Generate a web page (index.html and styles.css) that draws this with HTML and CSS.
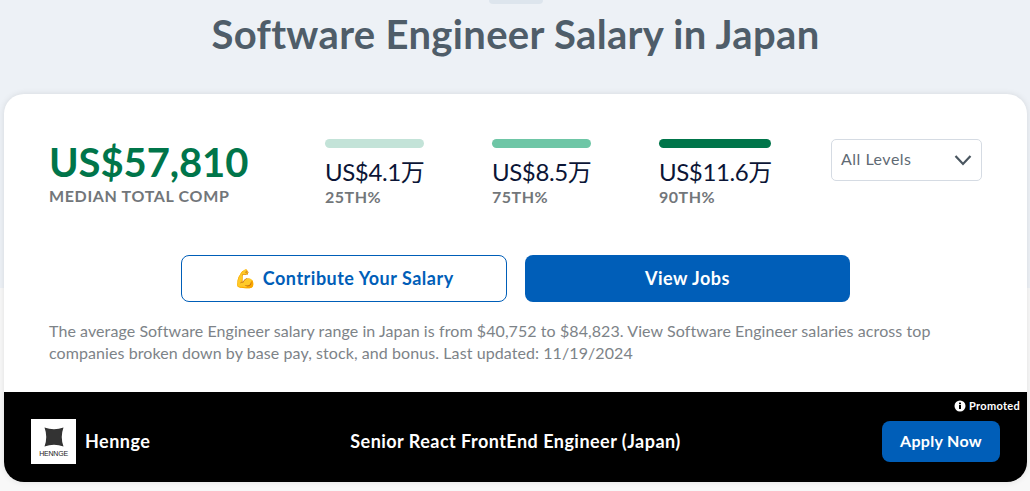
FILE: index.html
```html
<!DOCTYPE html>
<html lang="en">
<head>
<meta charset="utf-8">
<title>Software Engineer Salary in Japan</title>
<link rel="stylesheet" href="styles.css">
</head>
<body>
<div class="hero-bg"></div>
<div class="page">
  <div class="tab-stub"></div>
  <h1 class="title">Software Engineer Salary in Japan</h1>
  <section class="card">
    <div class="card-body">
      <div class="stats">
        <div class="median">
          <div class="median-value">US$57,810</div>
          <div class="median-label">MEDIAN TOTAL COMP</div>
        </div>
        <div class="pct pct-25">
          <div class="bar bar-25"></div>
          <div class="pct-value">US$4.1万</div>
          <div class="pct-label">25TH%</div>
        </div>
        <div class="pct pct-75">
          <div class="bar bar-75"></div>
          <div class="pct-value">US$8.5万</div>
          <div class="pct-label">75TH%</div>
        </div>
        <div class="pct pct-90">
          <div class="bar bar-90"></div>
          <div class="pct-value">US$11.6万</div>
          <div class="pct-label">90TH%</div>
        </div>
        <div class="select">
          <span class="select-text">All Levels</span>
          <svg class="chevron" viewBox="0 0 18 12" width="18" height="12"><path d="M1.5 2 L9 10 L16.5 2" fill="none" stroke="#4a5660" stroke-width="2.2"/></svg>
        </div>
      </div>
      <div class="actions">
        <a class="btn btn-outline"><span class="emoji">💪</span> Contribute Your Salary</a>
        <a class="btn btn-solid">View Jobs</a>
      </div>
      <p class="desc">The average Software Engineer salary range in Japan is from $40,752 to $84,823. View Software Engineer salaries across top companies broken down by base pay, stock, and bonus. Last updated: 11/19/2024</p>
    </div>
    <div class="promo">
      <div class="promoted">
        <svg viewBox="0 0 12 12" width="12" height="12"><circle cx="6" cy="6" r="5.5" fill="#fff"/><rect x="5" y="5" width="2" height="4" fill="#000"/><rect x="5" y="2.6" width="2" height="1.6" fill="#000"/></svg>
        <span>Promoted</span>
      </div>
      <div class="company">
        <div class="logo">
          <svg viewBox="0 0 20 20" width="20" height="20"><path d="M0.5 0.5 Q10 4 19.5 0.5 Q16 10 19.5 19.5 Q10 16 0.5 19.5 Q4 10 0.5 0.5Z" fill="#333"/></svg>
          <span class="logo-text">HENNGE</span>
        </div>
        <span class="company-name">Hennge</span>
      </div>
      <div class="job-title">Senior React FrontEnd Engineer (Japan)</div>
      <div class="apply-wrap"><a class="apply">Apply Now</a></div>
    </div>
  </section>
</div>
</body>
</html>
```
FILE: styles.css
```css
* { box-sizing: border-box; }
html, body { margin: 0; padding: 0; }
body {
  height: 491px;
  overflow: hidden;
  background: #f8f8f8;
  font-family: "Lato", "Noto Sans CJK SC", sans-serif;
  position: relative;
}
.hero-bg { position: absolute; left: 0; right: 0; top: 0; height: 288px; background: #edf1f6; }
.page { position: relative; padding: 0 3px 0 4px; }
.tab-stub { width: 54px; height: 4px; margin: 0 auto; background: #dde5ed; border-radius: 0 0 4px 4px; }
.title {
  margin: 0;
  height: 90px;
  padding-top: 7px;
  text-align: center;
  font-size: 40px;
  line-height: 46px;
  font-weight: 700;
  letter-spacing: .33px;
  color: #4f5d69;
}
.card {
  background: #fff;
  border-radius: 20px;
  box-shadow: 0 0 6px rgba(0,0,0,.1);
  overflow: hidden;
  height: 388px;
}
.card-body { padding: 45px 45px 0 45px; height: 298px; }
.stats { display: flex; align-items: flex-start; height: 116px; }
.median { width: 276px; }
.median-value { font-size: 40px; line-height: 46px; font-weight: 700; letter-spacing: -.1px; color: #00754a; }
.median-label { margin-top: 1px; font-size: 16px; line-height: 20px; font-weight: 700; color: #72767a; letter-spacing: .65px; }
.pct { margin-right: 68px; }
.pct-25, .pct-75 { width: 99px; }
.pct-90 { width: 112px; margin-right: 60px; }
.bar { height: 9px; border-radius: 5px; }
.bar-25 { background: #c3e3d8; }
.bar-75 { background: #6ec6a6; }
.bar-90 { background: #00754a; }
.pct-value { margin-top: 9px; font-size: 24px; line-height: 30px; letter-spacing: -.4px; color: #0b1536; white-space: nowrap; }
.pct-label { font-size: 16px; line-height: 20px; font-weight: 700; letter-spacing: .5px; color: #72767a; }
.select {
  width: 151px; height: 42px;
  border: 1px solid #d5dbe3; border-radius: 5px;
  display: flex; align-items: center; justify-content: space-between;
  padding: 0 9px;
  font-size: 16px; color: #5f6a74;
}
.select-text { letter-spacing: .5px; margin-bottom: 3px; }
.actions { display: flex; justify-content: center; gap: 18px; }
.btn {
  height: 47px;
  padding-bottom: 2px;
  display: flex; align-items: center; justify-content: center;
  border-radius: 8px;
  font-size: 18px; font-weight: 700;
  letter-spacing: .5px;
}
.btn-outline { width: 326px; border: 1px solid #005eb8; color: #005eb8; background: #fff; }
.emoji { margin-right: 6px; font-size: 18px; }
.btn-solid { width: 325px; background: #005eb8; color: #fff; }
.desc { margin: 18px 0 0; font-size: 16px; line-height: 22px; letter-spacing: .08px; color: #7d8388; max-width: 920px; }
.promo {
  position: relative;
  height: 90px;
  background: #000;
  color: #fff;
  display: grid; grid-template-columns: 1fr auto 1fr; align-items: center;
  padding: 8px 27px 0 27px;
}
.promoted {
  position: absolute; top: 7px; right: 7px;
  display: flex; align-items: center; gap: 3px;
  font-size: 11px; font-weight: 700;
  letter-spacing: .3px;
}
.company { display: flex; align-items: center; gap: 9px; }
.logo { width: 45px; height: 45px; background: #fff; display: flex; flex-direction: column; align-items: center; padding-top: 8px; }
.logo-text { font-family: "Liberation Sans", sans-serif; font-size: 7px; line-height: 9px; color: #222; margin-top: 2px; letter-spacing: -.2px; }
.company-name { font-size: 18px; font-weight: 700; letter-spacing: .5px; }
.job-title { font-size: 18px; font-weight: 700; letter-spacing: .47px; }
.apply-wrap { display: flex; justify-content: flex-end; }
.apply {
  width: 118px; height: 41px; border-radius: 8px; background: #005eb8;
  padding-bottom: 2px;
  display: flex; align-items: center; justify-content: center;
  font-size: 16px; font-weight: 700; letter-spacing: .3px;
}
```
